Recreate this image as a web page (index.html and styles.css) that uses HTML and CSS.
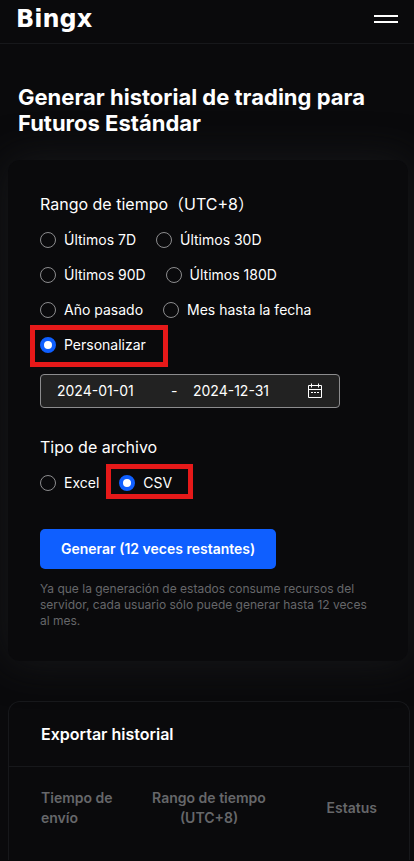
FILE: index.html
```
<!DOCTYPE html>
<html lang="es">
<head>
  <meta charset="UTF-8" />
  <meta name="viewport" content="width=device-width, initial-scale=1.0" />
  <title>BingX</title>
  <link rel="stylesheet" href="styles.css">
</head>
<body>
  <header class="topbar">
    <a class="logo" href="#">Bingx</a>
    <button type="button" class="menu" aria-label="Menú">
      <span></span>
      <span></span>
    </button>
  </header>

  <main>
    <h1>Generar historial de trading para Futuros Estándar</h1>

    <!-- Generar -->
    <form class="card">
      <fieldset>
        <legend>Rango de tiempo（UTC+8）</legend>
        <div class="options">
          <label><input type="radio" name="range" />Últimos 7D</label>
          <label><input type="radio" name="range" />Últimos 30D</label>
          <label><input type="radio" name="range" />Últimos 90D</label>
          <label><input type="radio" name="range" />Últimos 180D</label>
          <label><input type="radio" name="range" />Año pasado</label>
          <label><input type="radio" name="range" />Mes hasta la fecha</label>
          <label class="marked marked-range"><input type="radio" name="range" checked />Personalizar</label>
        </div>
      </fieldset>

      <div class="dates">
        <input type="text" value="2024-01-01" aria-label="Desde" />
        <span class="dash">-</span>
        <input type="text" value="2024-12-31" aria-label="Hasta" />
        <svg width="16" height="16" viewBox="0 0 16 16" fill="none" stroke="#fff" aria-hidden="true">
          <path d="M1.5 2.5h13v12h-13zM1.5 6.5h13M4.5 .5v4M11.5 .5v4" />
          <path d="M4 9.5h2M7 9.5h2M10 9.5h2" />
        </svg>
      </div>

      <fieldset>
        <legend>Tipo de archivo</legend>
        <div class="options">
          <label><input type="radio" name="type" />Excel</label>
          <label class="marked marked-type"><input type="radio" name="type" checked />CSV</label>
        </div>
      </fieldset>

      <button type="submit" class="generate">Generar (12 veces restantes)</button>
      <p class="note">Ya que la generación de estados consume recursos del servidor, cada usuario sólo puede generar hasta 12 veces al mes.</p>
    </form>

    <!-- Historial -->
    <section class="history">
      <h2>Exportar historial</h2>
      <table>
        <thead>
          <tr>
            <th class="sent">Tiempo de envío</th>
            <th class="range">Rango de tiempo (UTC+8)</th>
            <th class="status">Estatus</th>
          </tr>
        </thead>
      </table>
    </section>
  </main>
</body>
</html>
```
FILE: styles.css
```
* {
  box-sizing: border-box;
}

body {
  margin: 0;
  background: #0a0a0c;
  color: #fff;
  font-family: Inter, "Noto Sans CJK SC", sans-serif;
  font-size: 14px;
  line-height: 20px;
  overflow-x: hidden;
}

input,
button {
  font: inherit;
  color: inherit;
}

.topbar {
  display: flex;
  justify-content: space-between;
  align-items: center;
  height: 44px;
  padding: 0 16px 6px;
  border-bottom: 1px solid #17181b;
}

.logo {
  color: #fff;
  font-family: "DejaVu Sans", sans-serif;
  font-size: 24px;
  font-weight: 700;
  line-height: 32px;
  text-decoration: none;
}

.menu {
  display: flex;
  flex-direction: column;
  gap: 4px;
  padding: 0;
  border: none;
  background: none;
  cursor: pointer;
}

.menu span {
  width: 24px;
  height: 2px;
  background: #fff;
}

h1 {
  margin: 40px 18px 24px;
  font-size: 22px;
  font-weight: 700;
  line-height: 26px;
}

.card {
  margin: 0 6px 0 8px;
  padding: 32px;
  border-radius: 12px;
  background: #0a0a0c;
  box-shadow: 0 0 40px #18191b;
}

fieldset {
  margin: 0;
  padding: 0;
  border: none;
}

legend {
  padding: 0;
  margin-bottom: 14px;
  font-size: 16px;
  line-height: 24px;
}

.options {
  display: flex;
  flex-wrap: wrap;
  gap: 15px 20px;
}

.options label {
  display: flex;
  align-items: center;
  gap: 8px;
  position: relative;
}

input[type="radio"] {
  appearance: none;
  width: 16px;
  height: 16px;
  margin: 0;
  border: 1px solid #8c8c8e;
  border-radius: 50%;
}

input[type="radio"]:checked {
  border: 4px solid #0f5fff;
  background: #fff;
}

/* red highlight boxes over the chosen options */
.marked::after {
  content: "";
  position: absolute;
  border: 5px solid #e61919;
  pointer-events: none;
}

.marked-range::after {
  inset: -10px -22px -12px -10px;
}

.marked-type::after {
  inset: -9px -21px -6px -13px;
}

.dates {
  display: flex;
  align-items: center;
  max-width: 300px;
  height: 34px;
  margin: 19px 0 27px;
  padding: 0 16px;
  border: 1px solid #8c8c8e;
  border-radius: 4px;
  background: #222;
}

.dates input {
  flex: 1;
  min-width: 0;
  padding: 0;
  border: none;
  outline: none;
  background: none;
}

.dash {
  width: 22px;
}

.generate {
  display: block;
  height: 40px;
  margin: 36px 0 12px;
  padding: 0 21px;
  border: none;
  border-radius: 5px;
  background: #0f5fff;
  font-weight: 600;
  cursor: pointer;
}

.note {
  margin: 0;
  color: #66676a;
  font-size: 12px;
  line-height: 16px;
}

.history {
  margin: 40px 4px 0 8px;
  border: 1px solid #17181b;
  border-bottom: none;
  border-radius: 12px 12px 0 0;
}

h2 {
  margin: 0;
  padding: 20px 32px;
  border-bottom: 1px solid #17181b;
  font-size: 16px;
  font-weight: 600;
  line-height: 24px;
}

table {
  width: 100%;
  border-collapse: collapse;
  table-layout: fixed;
}

th {
  padding: 21px 0 32px;
  color: #66676a;
  font-weight: 600;
}

.sent {
  width: 30%;
  padding-left: 32px;
  text-align: left;
}

.range {
  width: 40%;
}

.status {
  padding-right: 32px;
  text-align: right;
}
```
